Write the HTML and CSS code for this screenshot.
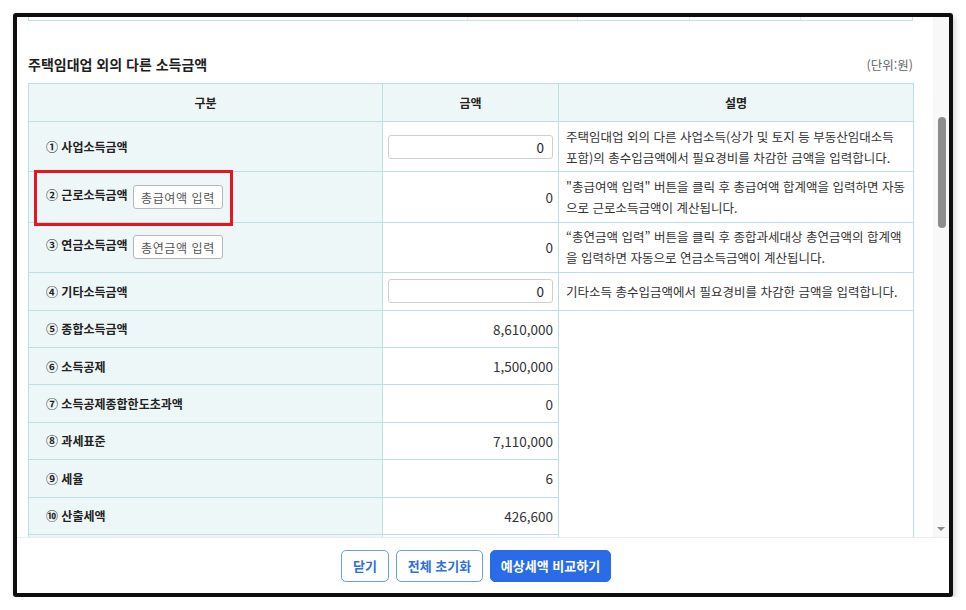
FILE: index.html
```html
<!DOCTYPE html>
<html lang="ko">
<head>
  <meta charset="UTF-8">
  <meta name="viewport" content="width=device-width, initial-scale=1.0">
  <title>종합소득세 예상세액 계산</title>
  <link rel="stylesheet" href="styles.css">
</head>
<body>

  <div class="frame">
    <div class="modal-body">
      <div class="scroll-area">
        <!-- bottom edge of the table above -->
        <div class="prev-table">
          <span class="c1"></span>
          <span class="c2"></span>
          <span class="c3"></span>
          <span class="c4"></span>
          <span class="c5"></span>
        </div>

        <div class="section-head">
          <h3>주택임대업 외의 다른 소득금액</h3>
          <span class="unit">(단위:원)</span>
        </div>

        <table class="income-table">
          <colgroup>
            <col class="col-name">
            <col class="col-amount">
            <col class="col-desc">
          </colgroup>
          <thead>
            <tr>
              <th>구분</th>
              <th>금액</th>
              <th>설명</th>
            </tr>
          </thead>
          <tbody>
            <tr class="tall">
              <td class="name">① 사업소득금액</td>
              <td class="amount"><input type="text" value="0"></td>
              <td class="desc">주택임대업 외의 다른 사업소득(상가 및 토지 등 부동산임대소득<br>포함)의 총수입금액에서 필요경비를 차감한 금액을 입력합니다.</td>
            </tr>
            <tr class="tall">
              <td class="name">
                ② 근로소득금액 <button class="btn-small">총급여액 입력</button>
                <span class="highlight"></span>
              </td>
              <td class="amount">0</td>
              <td class="desc">"총급여액 입력" 버튼을 클릭 후 총급여액 합계액을 입력하면 자동<br>으로 근로소득금액이 계산됩니다.</td>
            </tr>
            <tr class="tall">
              <td class="name">③ 연금소득금액 <button class="btn-small">총연금액 입력</button></td>
              <td class="amount">0</td>
              <td class="desc">“총연금액 입력” 버튼을 클릭 후 종합과세대상 총연금액의 합계액<br>을 입력하면 자동으로 연금소득금액이 계산됩니다.</td>
            </tr>
            <tr>
              <td class="name">④ 기타소득금액</td>
              <td class="amount"><input type="text" value="0"></td>
              <td class="desc">기타소득 총수입금액에서 필요경비를 차감한 금액을 입력합니다.</td>
            </tr>
            <tr>
              <td class="name">⑤ 종합소득금액</td>
              <td class="amount">8,610,000</td>
              <td class="desc" rowspan="7"></td>
            </tr>
            <tr>
              <td class="name">⑥ 소득공제</td>
              <td class="amount">1,500,000</td>
            </tr>
            <tr>
              <td class="name">⑦ 소득공제종합한도초과액</td>
              <td class="amount">0</td>
            </tr>
            <tr>
              <td class="name">⑧ 과세표준</td>
              <td class="amount">7,110,000</td>
            </tr>
            <tr>
              <td class="name">⑨ 세율</td>
              <td class="amount">6</td>
            </tr>
            <tr>
              <td class="name">⑩ 산출세액</td>
              <td class="amount">426,600</td>
            </tr>
            <!-- next row, scrolled below the fold -->
            <tr>
              <td class="name"></td>
              <td class="amount"></td>
            </tr>
          </tbody>
        </table>
      </div>

      <div class="scrollbar">
        <div class="thumb"></div>
        <div class="arrow-down"></div>
      </div>
    </div>

    <div class="modal-foot">
      <button class="btn btn-line btn-close">닫기</button>
      <button class="btn btn-line btn-reset">전체 초기화</button>
      <button class="btn btn-primary btn-compare">예상세액 비교하기</button>
    </div>
  </div>

</body>
</html>
```

FILE: styles.css
```css
* {
  box-sizing: border-box;
}

body {
  margin: 0;
  background: #fff;
  font-family: "Noto Sans CJK KR", "Noto Sans", sans-serif;
  color: #333;
}

.frame {
  width: 940px;
  height: 584px;
  margin: 13px 0 0 13px;
  border: 4px solid #0e0e0e;
  border-radius: 3px;
  background: #fff;
  box-shadow: 2px 3px 6px rgba(0, 0, 0, 0.18);
  display: flex;
  flex-direction: column;
}

.modal-body {
  display: flex;
  height: 520px;
}

.scroll-area {
  flex: 1;
  overflow: hidden;
  padding: 0 20px 0 11px;
}

/* previous table, scrolled almost out of view */
.prev-table {
  display: flex;
  height: 4px;
  border-bottom: 1px solid #c6e2e6;
}

.prev-table span {
  border-left: 1px solid #dfeef0;
}

.prev-table .c1 { width: 439px; border-left-color: #c6e2e6; }
.prev-table .c2 { width: 110px; background: #fffaf3; }
.prev-table .c3 { width: 112px; }
.prev-table .c4 { width: 111px; }
.prev-table .c5 { width: 113px; border-right: 1px solid #c6e2e6; }

.section-head {
  display: flex;
  justify-content: space-between;
  align-items: center;
  height: 20px;
  margin: 33px 0 9px;
}

.section-head h3 {
  margin: 0;
  font-size: 14px;
  font-weight: bold;
  color: #1e1e1e;
}

.unit {
  font-size: 12.5px;
  color: #666;
}

.income-table {
  width: 885px;
  table-layout: fixed;
  border-collapse: collapse;
  font-size: 12px;
}

.col-name { width: 354px; }
.col-amount { width: 176px; }
.col-desc { width: 355px; }

.income-table th,
.income-table td {
  border: 1px solid #bddfe3;
  height: 37.4px;
  padding: 0;
  vertical-align: middle;
}

.income-table th {
  height: 38px;
  background: #eef7f7;
  font-weight: bold;
  color: #222;
  text-align: center;
}

.income-table tr.tall td {
  height: 50.4px;
}

.income-table td.name {
  position: relative;
  padding-left: 17px;
  background: #eef7f7;
  font-weight: bold;
  color: #222;
}

.income-table td.amount {
  padding: 0 5px;
  text-align: right;
  font-size: 13.5px;
  color: #333;
}

.income-table td.desc {
  padding: 2px 7px;
  font-size: 12.5px;
  line-height: 21px;
  color: #333;
  vertical-align: middle;
}

.amount input {
  width: 165px;
  height: 24px;
  padding: 0 8px;
  border: 1px solid #cfcfcf;
  border-radius: 3px;
  text-align: right;
  font-family: inherit;
  font-size: 13.5px;
  color: #222;
}

.btn-small {
  height: 24px;
  width: 90px;
  margin-left: 2px;
  padding: 0;
  border: 1px solid #b8b8b8;
  border-radius: 3px;
  background: #fff;
  font-family: inherit;
  font-size: 12px;
  letter-spacing: 0.6px;
  color: #555;
  vertical-align: middle;
}

/* red annotation box */
.highlight {
  position: absolute;
  z-index: 2;
  left: 5px;
  top: -2px;
  width: 199px;
  height: 56px;
  border: 3px solid #e8151f;
  pointer-events: none;
}

.scrollbar {
  width: 16px;
  background: #f8f8f8;
  display: flex;
  flex-direction: column;
  align-items: center;
}

.thumb {
  width: 8px;
  height: 111px;
  margin: 100px 0 0 2px;
  border-radius: 4px;
  background: #8c8c8c;
}

.arrow-down {
  margin: auto 0 6px 0;
  border-left: 4px solid transparent;
  border-right: 4px solid transparent;
  border-top: 4px solid #8a8a8a;
}

.modal-foot {
  flex: 1;
  display: flex;
  justify-content: center;
  align-items: center;
  gap: 7px;
  padding-right: 14px;
  border-top: 1px solid #e8eded;
}

.btn {
  height: 32px;
  padding: 0;
  border-radius: 5px;
  font-family: inherit;
  font-size: 13px;
  font-weight: bold;
  cursor: pointer;
}

.btn-close { width: 48px; }
.btn-reset { width: 87px; }
.btn-compare { width: 121px; }

.btn-line {
  border: 1px solid #6a9ef0;
  background: #fff;
  color: #2f6fdd;
}

.btn-primary {
  border: 1px solid #2a6be8;
  background: #2a6be8;
  color: #fff;
}
```
